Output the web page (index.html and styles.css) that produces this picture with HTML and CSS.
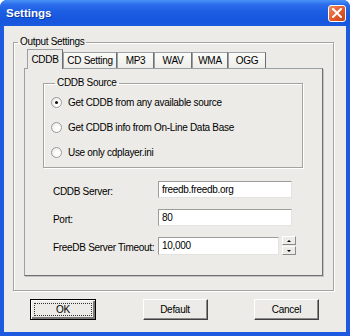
FILE: index.html
```html
<!DOCTYPE html>
<html lang="en">
<head>
  <meta charset="UTF-8" />
  <title>Settings</title>
  <link rel="stylesheet" href="styles.css">
</head>
<body>
  <div class="window">
    <div class="titlebar">
      <span class="title">Settings</span>
      <span class="close">
        <svg width="10" height="10" viewBox="0 0 10 10"><path d="M1 1 L9 9 M9 1 L1 9" stroke="#fff" stroke-width="2" stroke-linecap="square"/></svg>
      </span>
    </div>

    <div class="client">
      <fieldset class="group outer">
        <legend>Output Settings</legend>
        <div class="tabs">
          <span class="tab active t-cddb">CDDB</span>
          <span class="tab t-cd">CD Setting</span>
          <span class="tab t-mp3">MP3</span>
          <span class="tab t-wav">WAV</span>
          <span class="tab t-wma">WMA</span>
          <span class="tab t-ogg">OGG</span>
        </div>
        <div class="panel">
          <fieldset class="group source">
            <legend>CDDB Source</legend>
            <div class="radio"><span class="dot checked"></span>Get CDDB from any available source</div>
            <div class="radio"><span class="dot"></span>Get CDDB info from On-Line Data Base</div>
            <div class="radio"><span class="dot"></span>Use only cdplayer.ini</div>
          </fieldset>

          <div class="form">
            <div class="row">
              <span class="lbl">CDDB Server:</span>
              <span class="field">freedb.freedb.org</span>
            </div>
            <div class="row">
              <span class="lbl">Port:</span>
              <span class="field">80</span>
            </div>
            <div class="row">
              <span class="lbl">FreeDB Server Timeout:</span>
              <span class="field short">10,000</span>
              <span class="spin">
                <span class="spin-btn"><i class="up"></i></span>
                <span class="spin-btn"><i class="down"></i></span>
              </span>
            </div>
          </div>
        </div>
      </fieldset>

      <div class="buttons">
        <button class="btn default"><span class="focus">OK</span></button>
        <button class="btn">Default</button>
        <button class="btn">Cancel</button>
      </div>
    </div>
  </div>
</body>
</html>
```

FILE: styles.css
```css
body {
  margin: 0;
  font-family: 'Liberation Sans', Arial, sans-serif;
  font-size: 10px;
  letter-spacing: -0.3px;
  color: #000;
}
.window {
  width: 350px;
  height: 336px;
  display: flex;
  flex-direction: column;
  background: #1d5ae0;
  border-radius: 7px 7px 0 0;
  overflow: hidden;
}
.titlebar {
  height: 26px;
  display: flex;
  align-items: center;
  justify-content: space-between;
  padding: 0 4px 0 6px;
  background: linear-gradient(#4a93f8 0%, #2a6cea 18%, #1a5ce2 50%, #1756de 80%, #1a5ade 100%);
}
.title {
  color: #fff;
  font-size: 11.5px;
  font-weight: bold;
  letter-spacing: 0;
  text-shadow: 1px 1px 0 #0b3aa8;
}
.close {
  width: 18px;
  height: 17px;
  box-sizing: border-box;
  display: flex;
  align-items: center;
  justify-content: center;
  border: 1px solid #fff;
  border-radius: 3px;
  background: linear-gradient(135deg, #f08a62 0%, #e2582a 55%, #c8441a 100%);
}
.client {
  flex: 1;
  margin: 0 4px 4px;
  padding-top: 10px;
  background: #ecebe7;
  display: flex;
  flex-direction: column;
}

.group {
  margin: 0;
  padding: 0;
  border: 1px solid #a3a3a0;
  box-shadow: 1px 1px 0 #fff, inset 1px 1px 0 #fff;
}
.group legend {
  margin-left: 4px;
  padding: 0 2px;
  line-height: 12px;
}
.outer {
  margin: 0 12px 0 9px;
}

.tabs {
  display: flex;
  align-items: flex-end;
  margin: 1px 10px 0;
  padding-left: 3px;
}
.tab {
  box-sizing: border-box;
  height: 16px;
  line-height: 15px;
  text-align: center;
  border: 1px solid #9aa0a3;
  border-bottom: none;
  border-right-color: #6b6f72;
  background: linear-gradient(#fbfbf9, #eeede9);
}
.tab.active {
  height: 20px;
  line-height: 19px;
  margin-bottom: -1px;
  position: relative;
  z-index: 1;
  background: #ecebe7;
}
.t-cddb { width: 36px; }
.t-cd { width: 54px; }
.t-mp3 { width: 37px; }
.t-wav { width: 38px; }
.t-wma { width: 36px; }
.t-ogg { width: 38px; }

.panel {
  margin: 0 10px 14px;
  border: 1px solid #9aa0a3;
  border-right-color: #6e7173;
  border-bottom-color: #6e7173;
  box-shadow: 1px 1px 0 #c4c3bf;
}
.source {
  margin: 8px 19px 0 18px;
  padding: 1px 0 2px 7px;
}
.radio {
  height: 25px;
  display: flex;
  align-items: center;
  gap: 6px;
}
.dot {
  width: 11px;
  height: 11px;
  box-sizing: border-box;
  border-radius: 50%;
  border: 1px solid #9b9b98;
  background: radial-gradient(circle at 65% 65%, #fff 30%, #dcdcd8 100%);
  display: flex;
  align-items: center;
  justify-content: center;
}
.dot.checked::after {
  content: "";
  width: 3px;
  height: 3px;
  border-radius: 50%;
  background: #111;
}

.form {
  margin: 13px 0 21px 28px;
  display: flex;
  flex-direction: column;
  gap: 11px;
}
.row {
  display: flex;
  align-items: center;
  height: 17px;
}
.lbl {
  width: 105px;
  padding-top: 4px;
  line-height: 12px;
}
.field {
  box-sizing: border-box;
  width: 134px;
  height: 17px;
  line-height: 15px;
  padding-left: 3px;
  background: #fff;
  border: 1px solid;
  border-color: #9c9c9a #e4e3df #e4e3df #9c9c9a;
}
.field.short {
  width: 121px;
  height: 18px;
  line-height: 16px;
}
.spin {
  margin-left: 3px;
  display: flex;
  flex-direction: column;
  gap: 1px;
}
.spin-btn {
  box-sizing: border-box;
  width: 14px;
  height: 9px;
  display: flex;
  align-items: center;
  justify-content: center;
  background: #ecebe7;
  border: 1px solid;
  border-color: #fff #8a8a88 #8a8a88 #fff;
}
.spin-btn i {
  width: 0;
  height: 0;
  border-left: 2px solid transparent;
  border-right: 2px solid transparent;
}
.spin-btn .up { border-bottom: 2px solid #000; }
.spin-btn .down { border-top: 2px solid #000; }

.buttons {
  display: flex;
  justify-content: space-between;
  margin-top: 8px;
  padding: 0 27px 0 26px;
}
.btn {
  box-sizing: border-box;
  width: 65px;
  height: 21px;
  padding: 0;
  font: inherit;
  letter-spacing: inherit;
  color: #000;
  background: #ecebe7;
  border: 1px solid;
  border-color: #fff #404040 #404040 #fff;
  box-shadow: inset -1px -1px 0 #8a8a88;
}
.btn.default {
  width: 66px;
  border: 1px solid #000;
  box-shadow: inset 1px 1px 0 #fff, inset -2px -2px 0 #7a7a78;
  display: flex;
  padding: 3px;
}
.focus {
  flex: 1;
  display: flex;
  align-items: center;
  justify-content: center;
  border: 1px dotted #333;
}
```
